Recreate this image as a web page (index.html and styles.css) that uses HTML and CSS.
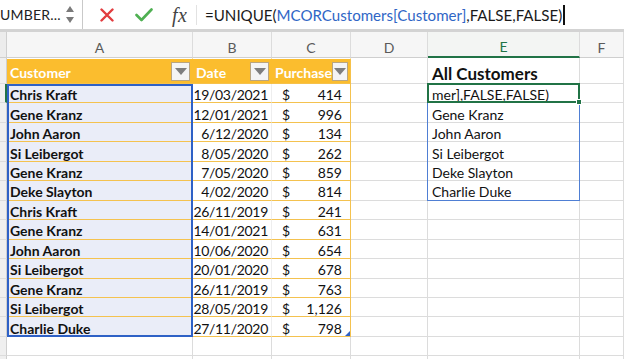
FILE: index.html
```html
<!DOCTYPE html>
<html>
<head>
<meta charset="utf-8">
<link rel="stylesheet" href="styles.css">
</head>
<body>
<div class="app">
  <div class="fbar">
    <div class="namebox">
      <span class="nb-text">UMBER...</span>
      <span class="spin"><span class="up"></span><span class="down"></span></span>
    </div>
    <div class="ficons">
      <svg class="ic-x" width="14" height="14" viewBox="0 0 14 14"><path d="M1.5 1.5 L12.5 12.5 M12.5 1.5 L1.5 12.5" stroke="#e23c3f" stroke-width="2.4" stroke-linecap="round"/></svg>
      <svg class="ic-ok" width="18" height="14" viewBox="0 0 18 14"><path d="M1.5 7 L6.5 12 L16.5 1.5" stroke="#4fb052" stroke-width="2.6" fill="none" stroke-linecap="round" stroke-linejoin="round"/></svg>
      <span class="fx">fx</span>
    </div>
    <div class="formula">=UNIQUE(<span class="ref">MCORCustomers[Customer]</span>,FALSE,FALSE)<span class="caret"></span></div>
  </div>
  <div class="sheet">
    <div class="cells grid">
      <!-- column headers -->
      <div class="ch rh0"></div>
      <div class="ch">A</div>
      <div class="ch">B</div>
      <div class="ch">C</div>
      <div class="ch">D</div>
      <div class="ch ch-act">E</div>
      <div class="ch">F</div>

      <!-- row 1 -->
      <div class="rh"></div>
      <div class="c th">Customer<span class="dd"></span></div>
      <div class="c th">Date<span class="dd"></span></div>
      <div class="c th th-last">Purchase<span class="dd"></span></div>
      <div class="c"></div>
      <div class="c title">All Customers</div>
      <div class="c"></div>

      <!-- row 2 -->
      <div class="rh rh-act"></div>
      <div class="c tn">Chris Kraft</div>
      <div class="c td">19/03/2021</div>
      <div class="c tp"><span>$</span><span>414</span></div>
      <div class="c"></div>
      <div class="c ev">mer],FALSE,FALSE)</div>
      <div class="c"></div>

      <div class="rh"></div>
      <div class="c tn">Gene Kranz</div>
      <div class="c td">12/01/2021</div>
      <div class="c tp"><span>$</span><span>996</span></div>
      <div class="c"></div>
      <div class="c ev">Gene Kranz</div>
      <div class="c"></div>

      <div class="rh"></div>
      <div class="c tn">John Aaron</div>
      <div class="c td">6/12/2020</div>
      <div class="c tp"><span>$</span><span>134</span></div>
      <div class="c"></div>
      <div class="c ev">John Aaron</div>
      <div class="c"></div>

      <div class="rh"></div>
      <div class="c tn">Si Leibergot</div>
      <div class="c td">8/05/2020</div>
      <div class="c tp"><span>$</span><span>262</span></div>
      <div class="c"></div>
      <div class="c ev">Si Leibergot</div>
      <div class="c"></div>

      <div class="rh"></div>
      <div class="c tn">Gene Kranz</div>
      <div class="c td">7/05/2020</div>
      <div class="c tp"><span>$</span><span>859</span></div>
      <div class="c"></div>
      <div class="c ev">Deke Slayton</div>
      <div class="c"></div>

      <div class="rh"></div>
      <div class="c tn">Deke Slayton</div>
      <div class="c td">4/02/2020</div>
      <div class="c tp"><span>$</span><span>814</span></div>
      <div class="c"></div>
      <div class="c ev">Charlie Duke</div>
      <div class="c"></div>

      <div class="rh"></div>
      <div class="c tn">Chris Kraft</div>
      <div class="c td">26/11/2019</div>
      <div class="c tp"><span>$</span><span>241</span></div>
      <div class="c"></div>
      <div class="c"></div>
      <div class="c"></div>

      <div class="rh"></div>
      <div class="c tn">Gene Kranz</div>
      <div class="c td">14/01/2021</div>
      <div class="c tp"><span>$</span><span>631</span></div>
      <div class="c"></div>
      <div class="c"></div>
      <div class="c"></div>

      <div class="rh"></div>
      <div class="c tn">John Aaron</div>
      <div class="c td">10/06/2020</div>
      <div class="c tp"><span>$</span><span>654</span></div>
      <div class="c"></div>
      <div class="c"></div>
      <div class="c"></div>

      <div class="rh"></div>
      <div class="c tn">Si Leibergot</div>
      <div class="c td">20/01/2020</div>
      <div class="c tp"><span>$</span><span>678</span></div>
      <div class="c"></div>
      <div class="c"></div>
      <div class="c"></div>

      <div class="rh"></div>
      <div class="c tn">Gene Kranz</div>
      <div class="c td">26/11/2019</div>
      <div class="c tp"><span>$</span><span>763</span></div>
      <div class="c"></div>
      <div class="c"></div>
      <div class="c"></div>

      <div class="rh"></div>
      <div class="c tn">Si Leibergot</div>
      <div class="c td">28/05/2019</div>
      <div class="c tp"><span>$</span><span>1,126</span></div>
      <div class="c"></div>
      <div class="c"></div>
      <div class="c"></div>

      <div class="rh"></div>
      <div class="c tn">Charlie Duke</div>
      <div class="c td">27/11/2020</div>
      <div class="c tp"><span>$</span><span>798</span></div>
      <div class="c"></div>
      <div class="c"></div>
      <div class="c"></div>

      <div class="rh"></div>
      <div class="c"></div>
      <div class="c"></div>
      <div class="c"></div>
      <div class="c"></div>
      <div class="c"></div>
      <div class="c"></div>

      <div class="rh"></div>
      <div class="c"></div>
      <div class="c"></div>
      <div class="c"></div>
      <div class="c"></div>
      <div class="c"></div>
      <div class="c"></div>
    </div>

    <div class="overlay grid">
      <div class="sel-a"></div>
      <div class="spill"></div>
      <div class="active"><span class="handle"></span></div>
      <div class="tbl-corner"><span class="resize"></span></div>
    </div>
  </div>
</div>
</body>
</html>
```

FILE: styles.css
```css
* { box-sizing: border-box; }
html, body { margin: 0; padding: 0; background: #fff; }
body { width: 624px; height: 359px; overflow: hidden; font-family: Lato, "Open Sans", sans-serif; color: #111; }
.app { display: flex; flex-direction: column; height: 359px; }

.fbar {
  height: 32px;
  display: flex;
  align-items: stretch;
  border-bottom: 3px solid #d3d3d3;
  background: #fff;
  flex: none;
}
.namebox {
  width: 83px;
  border-right: 1px solid #c9c9c9;
  display: flex;
  align-items: center;
  overflow: hidden;
}
.nb-text {
  font-size: 14px;
  margin-left: 0;
  width: 64px;
  color: #222;
  white-space: nowrap;
  letter-spacing: 0.2px;
}
.spin { display: flex; flex-direction: column; gap: 5px; margin-left: 2px; }
.up { width: 0; height: 0; border-left: 4px solid transparent; border-right: 4px solid transparent; border-bottom: 6px solid #7a7a7a; }
.down { width: 0; height: 0; border-left: 4px solid transparent; border-right: 4px solid transparent; border-top: 6px solid #7a7a7a; }

.ficons {
  width: 114px;
  display: flex;
  align-items: center;
  border-right: 1px solid #e2e2e2;
  margin: 5px 0 4px 0;
}
.ic-x { margin-left: 17px; }
.ic-ok { margin-left: 21px; }
.fx {
  margin-left: 19px;
  font-family: "Liberation Serif", "DejaVu Serif", serif;
  font-style: italic;
  font-size: 20px;
  color: #444;
  letter-spacing: 0.5px;
}
.formula {
  padding-left: 8px;
  font-size: 15.1px;
  display: flex;
  align-items: center;
  color: #1a1a1a;
  white-space: nowrap;
}
.ref { color: #2f66c6; }
.caret { display: inline-block; width: 1.5px; height: 20px; background: #111; margin-left: 1px; }

.sheet {
  flex: 1;
  display: grid;
  grid-template-columns: 1fr;
  grid-template-rows: 1fr;
  min-height: 0;
}
.grid {
  grid-area: 1 / 1;
  display: grid;
  grid-template-columns: 7px 186px 79px 79px 77px 152px 1fr;
  grid-template-rows: 26px 26px repeat(13, 19.46px) 19px 1fr;
  font-size: 14px;
  min-height: 0;
}
.overlay { pointer-events: none; z-index: 2; }

.ch {
  background: #f6f6f6;
  border-right: 1px solid #dcdcdc;
  border-bottom: 1px solid #cfcfcf;
  color: #5a5a5a;
  font-size: 14px;
  display: flex;
  align-items: center;
  justify-content: center;
  padding-top: 5px;
}
.rh0 { background: #ececec; border-right: 1px solid #cfcfcf; }
.ch-act { color: #217346; border-bottom: 2px solid #217346; background: #f3f5f3; }
.rh { background: #efefef; border-right: 1px solid #cfcfcf; border-bottom: 1px solid #dcdcdc; }
.rh-act { border-right: 2px solid #217346; }

.c {
  border-right: 1px solid #dcdcdc;
  border-bottom: 1px solid #dcdcdc;
  display: flex;
  align-items: center;
  white-space: nowrap;
  overflow: hidden;
  padding-top: 4px;
  line-height: 14px;
}
.th {
  background: #fbbd2e;
  border-right-color: #fbbd2e;
  border-bottom: 1px solid #f6c14a;
  color: #fff;
  font-weight: bold;
  padding-left: 3px;
  padding-right: 2px;
  padding-top: 3px;
  justify-content: space-between;
  border-top: 1px solid #fff;
}
.th-last { border-right: 1px solid #f6c14a; }
.dd {
  width: 19px;
  height: 19px;
  margin-top: -2px;
  background: #f4f4f4;
  border: 1px solid #b9a580;
  display: flex;
  align-items: center;
  justify-content: center;
}
.dd::after {
  content: "";
  border-left: 6px solid transparent;
  border-right: 6px solid transparent;
  border-top: 7px solid #7e7e7e;
}
.tn {
  background: #eaedf8;
  font-weight: bold;
  padding-left: 3px;
  border-bottom: 1px solid #f4c24f;
}
.td {
  justify-content: flex-end;
  padding-right: 3px;
  letter-spacing: -0.3px;
  border-bottom: 1px solid #f4c24f;
  border-right-color: #eeeeee;
}
.tp {
  justify-content: space-between;
  padding-left: 10px;
  padding-right: 8px;
  border-bottom: 1px solid #f4c24f;
  border-right: 1px solid #f4c24f;
}
.title { font-weight: bold; font-size: 17px; padding-left: 4px; padding-top: 6px; line-height: 17px; }
.ev { padding-left: 4px; }

.sel-a {
  grid-column: 2;
  grid-row: 3 / 16;
  border: 2px solid #2e61c6;
}
.spill {
  grid-column: 6;
  grid-row: 3 / 9;
  border: 1px solid #4f7fd4;
  margin-left: -1px;
  margin-top: -1px;
}
.active {
  grid-column: 6;
  grid-row: 3;
  border: 2px solid #217346;
  margin-left: -1px;
  margin-top: -1px;
  position: relative;
}
.handle {
  position: absolute;
  right: -4px;
  bottom: -4px;
  width: 6px;
  height: 6px;
  background: #217346;
  border: 1px solid #fff;
}
.tbl-corner {
  grid-column: 4;
  grid-row: 15;
  position: relative;
}
.resize {
  position: absolute;
  right: 1px;
  bottom: 1px;
  width: 0;
  height: 0;
  border-left: 5px solid transparent;
  border-bottom: 5px solid #2e61c6;
}
```
